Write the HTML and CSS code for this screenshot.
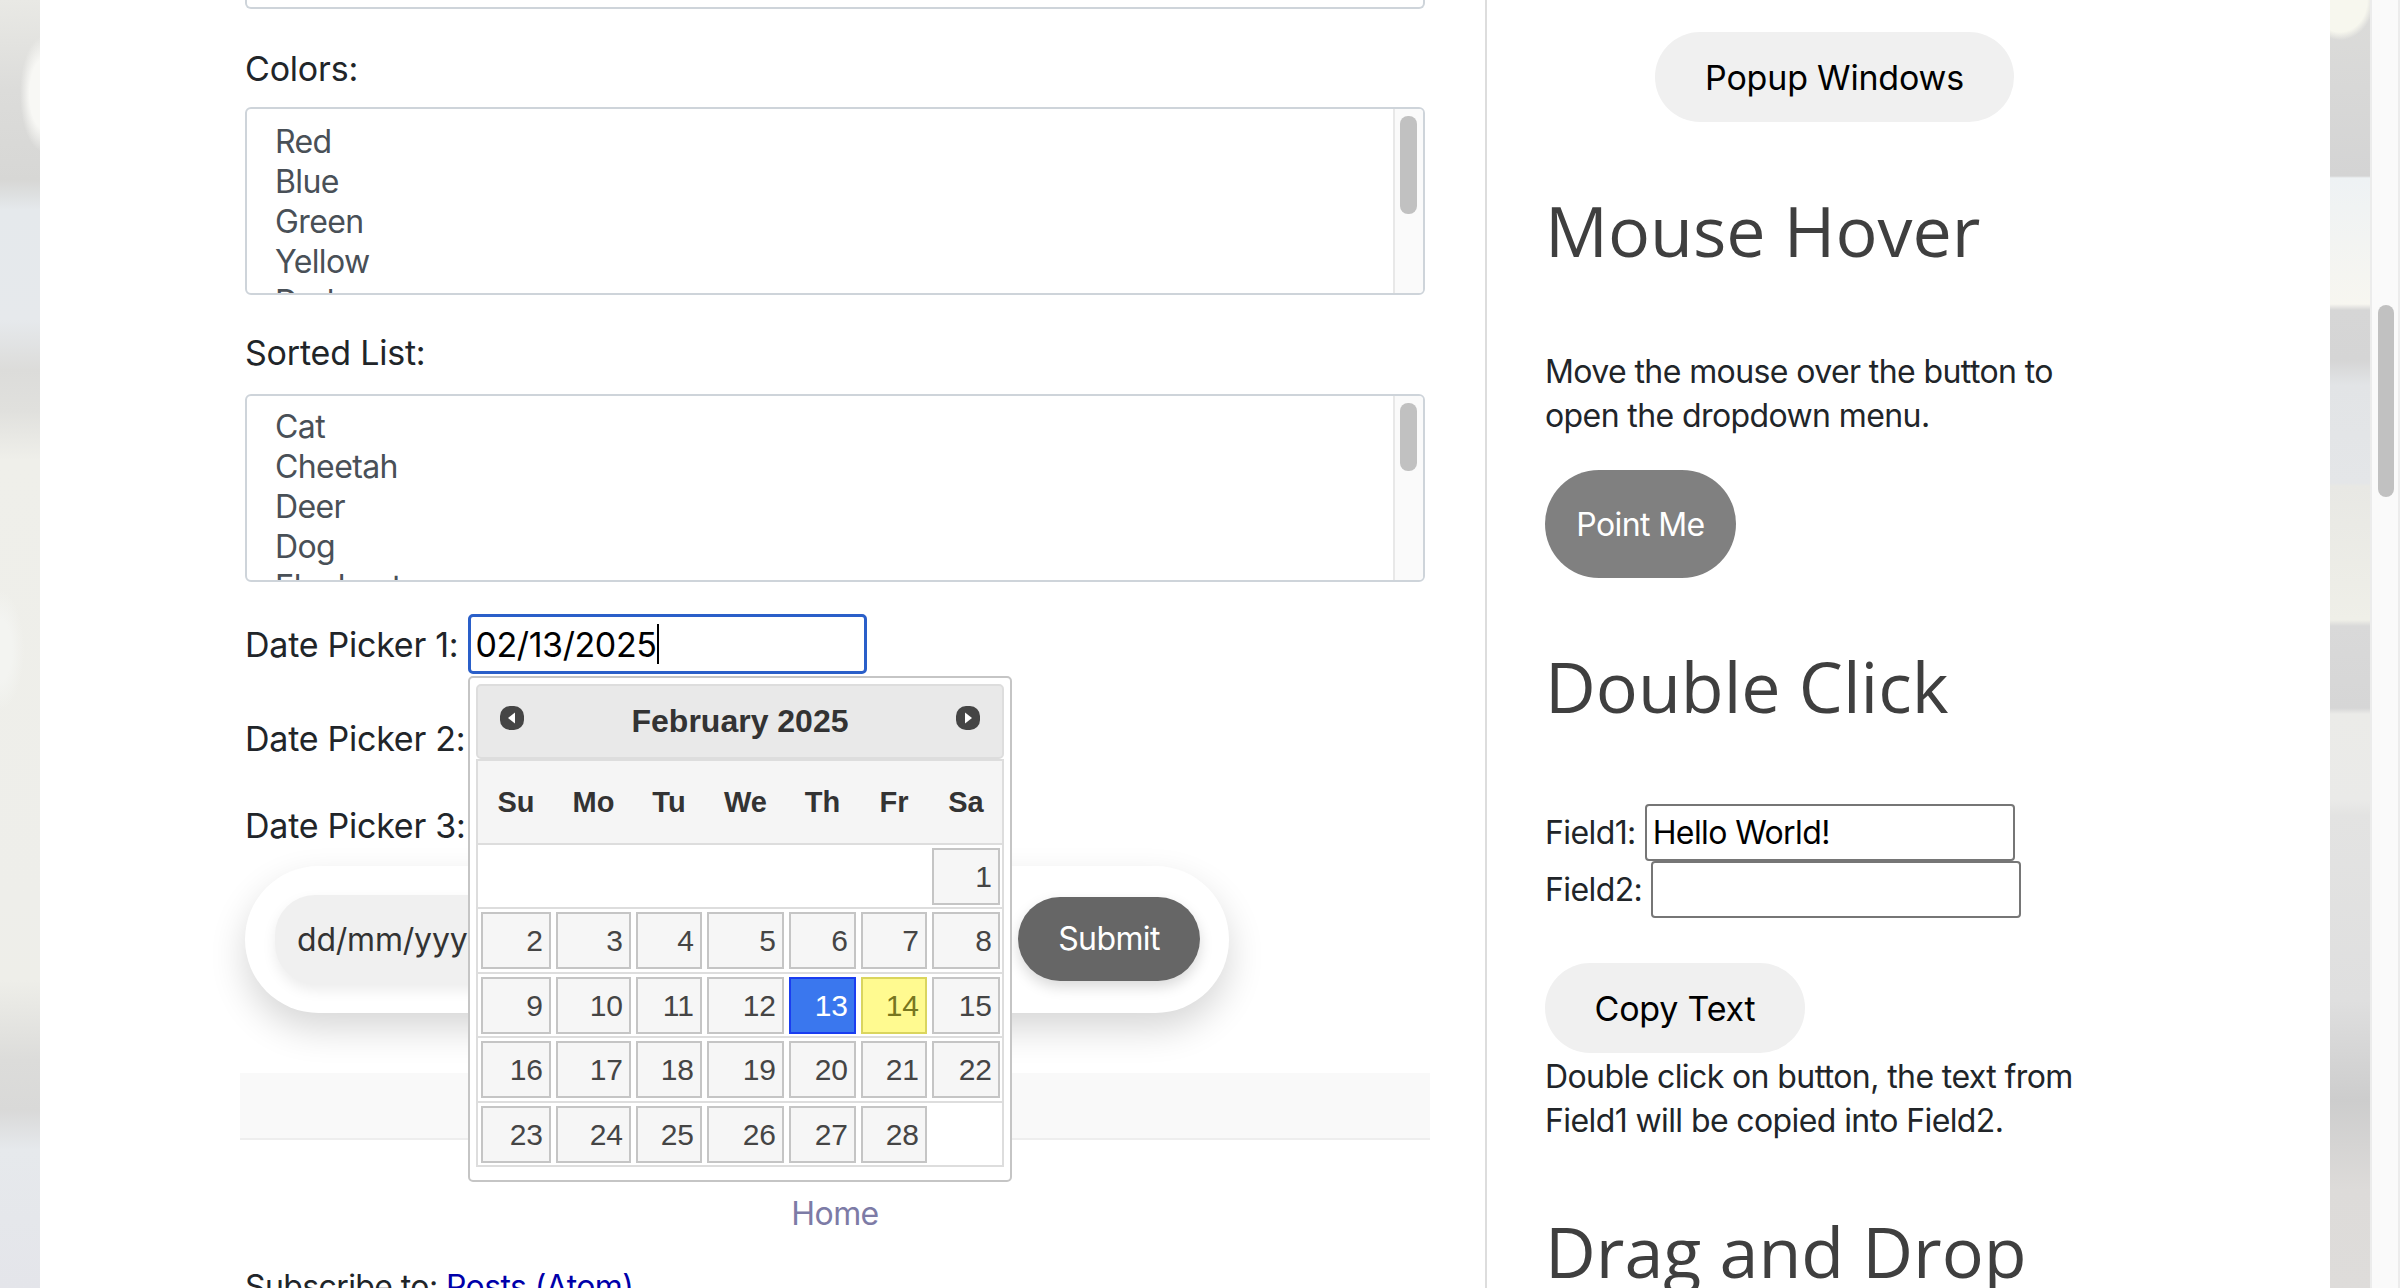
FILE: index.html
```html
<!DOCTYPE html>
<html>
<head>
  <meta charset="UTF-8">
  <title>Automation Testing Practice</title>
  <link rel="stylesheet" href="styles.css">
</head>
<body>
  <div class="backdrop backdrop-left"></div>
  <div class="page">
    <div class="main">
      <div class="top-box"></div>

      <div class="field-label label-colors">Colors:</div>
      <div class="listbox">
        <div class="list-items list-colors">
          <div>Red</div>
          <div>Blue</div>
          <div>Green</div>
          <div>Yellow</div>
          <div>Dark</div>
        </div>
        <div class="list-track"><div class="list-thumb thumb-long"></div></div>
      </div>

      <div class="field-label label-sorted">Sorted List:</div>
      <div class="listbox">
        <div class="list-items">
          <div>Cat</div>
          <div>Cheetah</div>
          <div>Deer</div>
          <div>Dog</div>
          <div>Elephant</div>
        </div>
        <div class="list-track"><div class="list-thumb thumb-short"></div></div>
      </div>

      <div class="date-row date-row-1">
        <span>Date Picker 1:</span>
        <div class="date-focus">02/13/2025<span class="caret"></span></div>

        <div class="calendar">
          <div class="cal-head">
            <svg class="cal-arrow" viewBox="0 0 26 26"><rect x="1" y="1" width="24" height="24" rx="10" fill="#454545"/><path d="M16 7.5v11L9 13z" fill="#fff"/></svg>
            <span class="cal-title">February 2025</span>
            <svg class="cal-arrow" viewBox="0 0 26 26"><rect x="1" y="1" width="24" height="24" rx="10" fill="#454545"/><path d="M10 7.5v11l7-5.500z" fill="#fff"/></svg>
          </div>
          <div class="cal-dow">
            <span>Su</span><span>Mo</span><span>Tu</span><span>We</span><span>Th</span><span>Fr</span><span>Sa</span>
          </div>
          <div class="cal-week">
            <i></i><i></i><i></i><i></i><i></i><i></i><b>1</b>
          </div>
          <div class="cal-week">
            <b>2</b><b>3</b><b>4</b><b>5</b><b>6</b><b>7</b><b>8</b>
          </div>
          <div class="cal-week">
            <b>9</b><b>10</b><b>11</b><b>12</b><b class="day-active">13</b><b class="day-today">14</b><b>15</b>
          </div>
          <div class="cal-week">
            <b>16</b><b>17</b><b>18</b><b>19</b><b>20</b><b>21</b><b>22</b>
          </div>
          <div class="cal-week">
            <b>23</b><b>24</b><b>25</b><b>26</b><b>27</b><b>28</b><i></i>
          </div>
        </div>
      </div>
      <div class="date-row date-row-2"><span>Date Picker 2:</span></div>
      <div class="date-row date-row-3"><span>Date Picker 3:</span></div>

      <div class="range-form">
        <div class="range-input">dd/mm/yyyy</div>
        <div class="submit-btn">Submit</div>
      </div>

      <div class="band"></div>
      <div class="home-link">Home</div>
      <div class="subscribe">Subscribe to: <a href="#">Posts (Atom)</a></div>
    </div>

    <div class="side">
      <div class="popup-wrap"><button class="soft-btn popup-btn">Popup Windows</button></div>

      <h2 class="hover-title">Mouse Hover</h2>
      <p class="hover-text">Move the mouse over the button to open the dropdown menu.</p>
      <button class="point-btn">Point Me</button>

      <h2 class="click-title">Double Click</h2>
      <div class="copy-row copy-row-1"><label for="field1">Field1:</label><input id="field1" type="text" value="Hello World!"></div>
      <div class="copy-row copy-row-2"><label for="field2">Field2:</label><input id="field2" type="text"></div>
      <button class="soft-btn copy-btn">Copy Text</button>
      <p class="copy-text">Double click on button, the text from Field1 will be copied into Field2.</p>

      <h2 class="drag-title">Drag and Drop</h2>
    </div>
  </div>
  <div class="backdrop backdrop-right"></div>
  <div class="scrollbar"><div class="scroll-thumb"></div></div>
</body>
</html>
```

FILE: styles.css
```css
* {
  box-sizing: border-box;
}
html, body {
  height: 100%;
  margin: 0;
  overflow: hidden;
}
body {
  display: flex;
  height: 1288px;
  background: #fff;
  font-family: "Inter", "Liberation Sans", sans-serif;
  font-size: 32px;
  letter-spacing: -0.6px;
  color: #212529;
}

/* blurred photo behind the page, only two strips show */
.backdrop {
  width: 40px;
  flex: none;
}
.backdrop-left {
  background-image:
    radial-gradient(ellipse 24px 58px at 44px 94px, #f8f8f5 60%, rgba(248,248,245,0) 100%),
    radial-gradient(ellipse 24px 60px at 0 650px, #f3f4f1 50%, rgba(243,244,241,0) 100%),
    linear-gradient(#e9e9e5 0, #dcdcda 90px, #d7d7d5 180px, #e5e9ec 210px, #e6e9ec 320px, #dcdcda 370px, #e0e0dd 410px, #efefea 460px, #eeeeea 900px, #eeeee9 980px, #dcdcda 1060px, #d9d9d8 1110px, #e6e9ec 1150px, #e4e5ea 1288px);
}
.backdrop-right {
  background-image:
    radial-gradient(ellipse 34px 40px at 10px 0, #f7f7ee 80%, rgba(247,247,238,0) 100%),
    linear-gradient(#dcdcda 0, #d4d4d4 176px, #eef2f4 178px, #f7f6f0 304px, #d6d6d6 310px, #d5d5d5 360px, #e2e4e6 385px, #e4e6e8 483px, #e8e8e4 486px, #efefe8 620px, #d9d9d9 626px, #d6d6d6 708px, #ebebe8 714px, #eaeae8 800px, #e3e3e2 815px, #dfdfdf 1000px, #cdcdcd 1100px, #dddbd9 1190px, #dedcda 1288px);
}

.page {
  flex: none;
  display: flex;
  width: 2290px;
  height: 1288px;
  overflow: hidden;
  background: #fff;
}

.main {
  flex: none;
  width: 1445px;
  padding: 0 60px 0 205px;
}
.top-box {
  height: 9px;
  border: 2px solid #ced4da;
  border-top: 0;
  border-radius: 0 0 6px 6px;
}
.field-label {
  font-size: 34px;
  letter-spacing: -0.2px;
  line-height: 40px;
}
.label-colors {
  margin-top: 40px;
  margin-bottom: 18px;
}
.label-sorted {
  margin-top: 38px;
  margin-bottom: 21px;
}

.listbox {
  display: flex;
  height: 188px;
  border: 2px solid #ced4da;
  border-radius: 6px;
  overflow: hidden;
  color: #495057;
}
.list-items {
  flex: 1;
  padding: 11px 0 0 28px;
  line-height: 40px;
}
.list-colors {
  padding-top: 13px;
}
.list-track {
  width: 30px;
  padding: 7px 6px 0 5px;
  background: #fafafa;
  border-left: 2px solid #e8e8e8;
}
.list-thumb {
  background: #c1c1c1;
  border-radius: 8px;
}
.thumb-long {
  height: 98px;
}
.thumb-short {
  height: 68px;
}

.date-row {
  position: relative;
  display: flex;
  align-items: center;
  gap: 10px;
  height: 60px;
  font-size: 34px;
  letter-spacing: -0.25px;
}
.date-row-1 {
  margin-top: 32px;
}
.date-row-2 {
  margin-top: 34px;
}
.date-row-3 {
  margin-top: 27px;
}
.date-focus {
  display: flex;
  align-items: center;
  flex: none;
  width: 399px;
  height: 60px;
  padding-left: 4px;
  border: 3px solid #2a5fc9;
  border-radius: 5px;
  font-size: 34px;
  letter-spacing: -0.4px;
  color: #000;
}
.caret {
  width: 2px;
  height: 40px;
  background: #000;
}

.calendar {
  position: absolute;
  left: 223px;
  top: 62px;
  z-index: 2;
  width: 544px;
  height: 506px;
  padding: 6px;
  background: #fff;
  border: 2px solid #c5c5c5;
  border-radius: 5px;
  font-family: "Liberation Sans", Arial, sans-serif;
  letter-spacing: 0;
  color: #333;
}
.cal-head {
  display: flex;
  justify-content: space-between;
  align-items: center;
  height: 75px;
  padding: 0 21px;
  background: #e9e9e9;
  border: 2px solid #ddd;
  border-radius: 5px;
}
.cal-arrow {
  width: 26px;
  height: 26px;
  margin-top: -8px;
}
.cal-title {
  font-size: 32px;
  font-weight: bold;
}
.cal-dow {
  display: grid;
  grid-template-columns: 70px 75px 66px 77px 67px 66px 68px;
  column-gap: 5px;
  align-items: center;
  height: 86px;
  padding: 0 3px;
  background: #f5f5f5;
  border: 2px solid #ddd;
  font-size: 29px;
  font-weight: bold;
  text-align: center;
}
.cal-week {
  display: grid;
  grid-template-columns: 70px 75px 66px 77px 67px 66px 68px;
  column-gap: 5px;
  height: 64.4px;
  padding: 3px 3px 4px;
  border: solid #ddd;
  border-width: 0 2px 2px 2px;
}
.cal-week b {
  padding-right: 6px;
  background: #f6f6f6;
  border: 2px solid #c5c5c5;
  font-size: 30px;
  font-weight: normal;
  line-height: 53px;
  text-align: right;
  color: #454545;
}
.cal-week .day-active {
  background: #3a77ee;
  border-color: #1a3df0;
  color: #fff;
}
.cal-week .day-today {
  background: #fffa90;
  border-color: #dad55e;
  color: #777620;
}

.range-form {
  display: flex;
  align-items: center;
  width: 984px;
  height: 147px;
  margin-top: 11px;
  padding: 0 29px 0 30px;
  background: #fff;
  border-radius: 74px;
  box-shadow: 0 16px 36px rgba(0, 0, 0, 0.16);
}
.range-input {
  width: 718px;
  height: 89px;
  padding-left: 22px;
  background: #f0f0f0;
  border-radius: 40px;
  box-shadow: 0 6px 14px rgba(0, 0, 0, 0.08);
  line-height: 89px;
  letter-spacing: -0.2px;
  color: #333;
}
.submit-btn {
  width: 182px;
  height: 84px;
  margin-left: auto;
  margin-top: -2px;
  background: #666;
  border-radius: 42px;
  box-shadow: 0 6px 14px rgba(0, 0, 0, 0.15);
  line-height: 84px;
  text-align: center;
  color: #fff;
}

.band {
  height: 67px;
  margin: 60px -5px 0;
  background: #f9f9f9;
  border-bottom: 2px solid #eee;
}
.home-link {
  margin-top: 54px;
  line-height: 40px;
  text-align: center;
  color: #7d7ba6;
}
.subscribe {
  margin-top: 33px;
  line-height: 40px;
}
.subscribe a {
  color: #0000aa;
  text-decoration: none;
}

.side {
  flex: none;
  width: 845px;
  padding-left: 58px;
  border-left: 2px solid #ddd;
}
.popup-wrap {
  width: 579px;
  padding-top: 32px;
  text-align: center;
}
button {
  display: block;
  border: 0;
  font-family: "Inter", "Liberation Sans", sans-serif;
  font-size: 34px;
  letter-spacing: -0.2px;
}
.soft-btn {
  height: 90px;
  background: #f0f0f0;
  border-radius: 45px;
  color: #000;
}
.popup-btn {
  width: 359px;
  margin: 0 auto;
}
h2 {
  margin: 0;
  font-family: "Open Sans", "Noto Sans", sans-serif;
  font-size: 70px;
  font-weight: 400;
  letter-spacing: 0;
  line-height: 96px;
  color: #3f3f3f;
}
.hover-title {
  margin-top: 60px;
}
p {
  width: 560px;
  margin: 0;
  line-height: 44px;
}
.hover-text {
  margin-top: 72px;
}
.point-btn {
  width: 191px;
  height: 108px;
  margin-top: 32px;
  background: #808080;
  border-radius: 54px;
  font-size: 32px;
  letter-spacing: -0.6px;
  color: #fff;
}
.click-title {
  margin-top: 60px;
}
.copy-row {
  display: flex;
  align-items: center;
  gap: 9px;
  height: 57px;
}
.copy-row-1 {
  margin-top: 70px;
}
.copy-row input {
  width: 370px;
  height: 57px;
  padding: 0 6px;
  border: 2px solid #767676;
  border-radius: 4px;
  font-family: "Inter", "Liberation Sans", sans-serif;
  font-size: 32px;
  letter-spacing: -0.6px;
  color: #000;
}
.copy-btn {
  width: 260px;
  margin-top: 45px;
}
.copy-text {
  margin-top: 2px;
}
.drag-title {
  margin-top: 60px;
}

.scrollbar {
  flex: none;
  width: 30px;
  height: 1288px;
  padding: 305px 4px 0 6px;
  background: #fafafa;
  border: solid #ececec;
  border-width: 0 2px;
}
.scroll-thumb {
  height: 192px;
  background: #c1c1c1;
  border-radius: 8px;
}
```
